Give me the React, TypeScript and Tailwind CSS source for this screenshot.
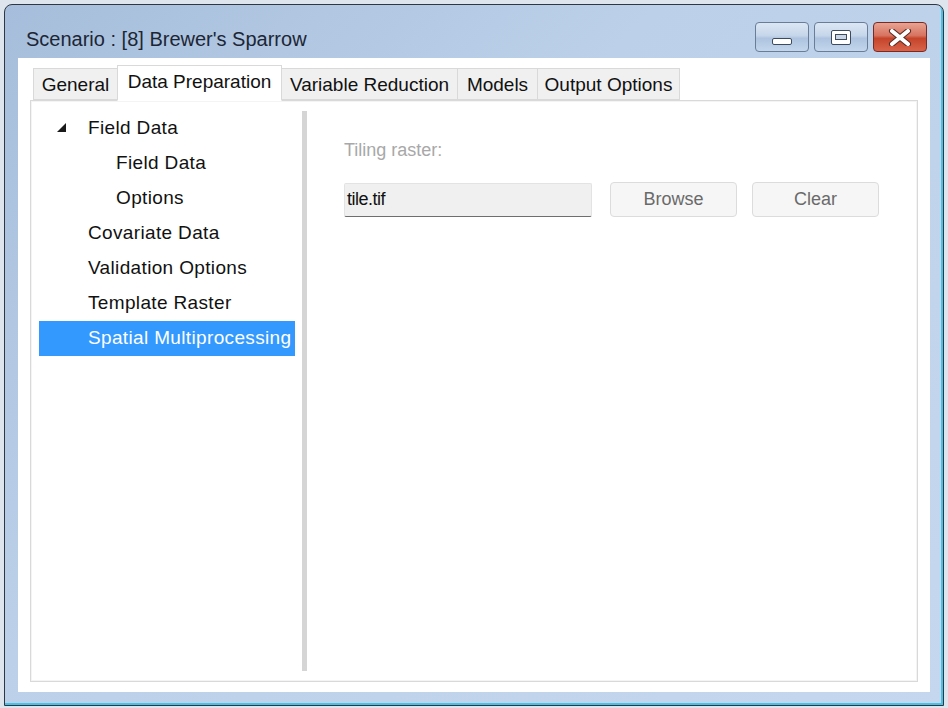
import React from 'react';

const tabs = [
  { label: 'General', w: 84 },
  { label: 'Data Preparation', w: 165 },
  { label: 'Variable Reduction', w: 176 },
  { label: 'Models', w: 80 },
  { label: 'Output Options', w: 142 },
];

const treeItems = [
  { label: 'Field Data', level: 1, arrow: true },
  { label: 'Field Data', level: 2 },
  { label: 'Options', level: 2 },
  { label: 'Covariate Data', level: 1 },
  { label: 'Validation Options', level: 1 },
  { label: 'Template Raster', level: 1 },
  { label: 'Spatial Multiprocessing', level: 1, selected: true },
];

function CaptionButton({ kind }: { kind: 'min' | 'max' | 'close' }) {
  const close = kind === 'close';
  return (
    <div
      className={
        'w-[54px] h-[30px] rounded-[4px] border flex items-center justify-center ' +
        (close
          ? 'border-[#7a2a22] bg-[linear-gradient(#e8a393_0%,#d7735f_45%,#c5442a_55%,#d8644a_100%)]'
          : 'border-[#6a7d96] bg-[linear-gradient(#dce7f4_0%,#c6d6ea_45%,#adc3df_55%,#c3d6ec_100%)]')
      }>
      {kind === 'min' && <div className="w-[20px] h-[7px] mt-[8px] rounded-[2px] border border-[#3d4b5e] bg-white" />}
      {kind === 'max' && (
        <div className="w-[20px] h-[15px] rounded-[2px] border border-[#3d4b5e] bg-white flex items-center justify-center">
          <div className="w-[12px] h-[6px] border border-[#3d4b5e] bg-[#c9d5e4]" />
        </div>
      )}
      {kind === 'close' && (
        <svg width="24" height="17" viewBox="0 0 24 17">
          <path d="M4 2 L20 15 M20 2 L4 15" stroke="#5a2a22" strokeWidth="6" strokeLinecap="round" />
          <path d="M4 2 L20 15 M20 2 L4 15" stroke="#ffffff" strokeWidth="4" strokeLinecap="round" />
        </svg>
      )}
    </div>
  );
}

export default function App() {
  return (
    <div
      className="w-[948px] h-[708px] bg-[#dfe5ec] pt-[4px] pl-[4px] overflow-hidden"
      style={{ fontFamily: '"Liberation Sans", Arial, sans-serif' }}>
      <div className="w-[940px] h-[702px] rounded-t-[8px] border border-[#2f3742] bg-[linear-gradient(135deg,#a6bedb_0%,#bcd0e9_40%,#c4d7ee_100%)] shadow-[inset_-2px_-2px_0_#45c3e6] flex flex-col">
        {/* Title bar */}
        <div className="h-[53px] flex items-start justify-between pl-[21px] pr-[16px]">
          <div className="pt-[22px] text-[20px] leading-[24px] text-[#1c2635]">Scenario : [8] Brewer's Sparrow</div>
          <div className="pt-[17px] flex gap-[5px]">
            <CaptionButton kind="min" />
            <CaptionButton kind="max" />
            <CaptionButton kind="close" />
          </div>
        </div>

        {/* Client area */}
        <div className="flex-1 px-[13px] pb-[13px]">
          <div className="h-full bg-white pt-[7px] px-[12px] pb-[10px] flex flex-col">
            {/* Tab strip */}
            <div className="flex items-end pl-[3px] h-[35px] relative z-10">
              {tabs.map((t, i) => {
                const sel = t.label === 'Data Preparation';
                return (
                  <div
                    key={t.label}
                    className={
                      'shrink-0 border border-[#d9d9d9] text-[19px] text-[#111] whitespace-nowrap flex items-center justify-center ' +
                      (sel
                        ? 'h-[36px] -mb-[1px] bg-white border-b-white pb-[2px]'
                        : 'h-[32px] bg-[#f0f0f0] pt-[3px]') +
                      (i > 0 && !sel ? ' border-l-0' : '') +
                      (i === 0 ? ' border-r-0' : '')
                    }
                    style={{ width: t.w }}>
                    {t.label}
                  </div>
                );
              })}
            </div>

            {/* Tab panel */}
            <div className="flex-1 border border-[#d9d9d9] shadow-[inset_0_0_0_1px_#f4f4f4] bg-white flex pl-[8px] pt-[10px] pb-[10px]">
              {/* Tree */}
              <div className="w-[256px] flex flex-col">
                {treeItems.map((it, i) => (
                  <div
                    key={i}
                    className={
                      'h-[35px] flex items-center text-[19px] tracking-[0.35px] whitespace-nowrap ' +
                      (it.selected ? 'bg-[#3399ff] text-white' : 'text-[#111]')
                    }
                    style={{ paddingLeft: it.level === 1 ? 49 : 77 }}>
                    {it.arrow && (
                      <svg className="-ml-[31px] mr-[22px] mb-[3px]" width="9" height="9" viewBox="0 0 9 9">
                        <path d="M9 0 L9 9 L0 9 Z" fill="#1a1a1a" />
                      </svg>
                    )}
                    {it.label}
                  </div>
                ))}
              </div>

              {/* Splitter */}
              <div className="ml-[7px] w-[5px] bg-[#d5d5d5]" />

              {/* Right content */}
              <div className="flex-1 pl-[37px] pt-[27px]">
                <div className="text-[18px] leading-[24px] text-[#a8a8a8]">Tiling raster:</div>
                <div className="mt-[20px] flex items-center">
                  <div className="w-[248px] h-[34px] bg-[#f0f0f0] border border-[#e3e3e3] border-b-[#6e6e6e] rounded-[2px] flex items-center pl-[2px] text-[18px] text-[#111] tracking-[-0.5px]">
                    tile.tif
                  </div>
                  <div className="ml-[18px] w-[127px] h-[35px] rounded-[4px] border border-[#dcdcdc] bg-[#f6f6f6] flex items-center justify-center text-[18px] text-[#6a6a6a]">
                    Browse
                  </div>
                  <div className="ml-[15px] w-[127px] h-[35px] rounded-[4px] border border-[#dcdcdc] bg-[#f6f6f6] flex items-center justify-center text-[18px] text-[#6a6a6a]">
                    Clear
                  </div>
                </div>
              </div>
            </div>
          </div>
        </div>
      </div>
    </div>
  );
}
